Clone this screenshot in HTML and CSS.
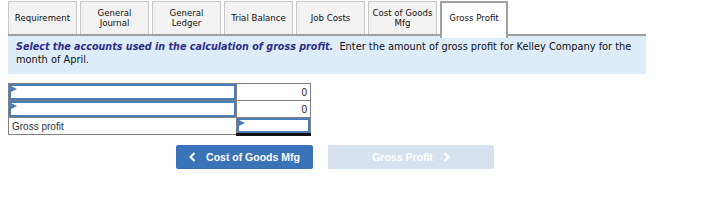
FILE: index.html
```html
<!DOCTYPE html>
<html lang="en">
<head>
    <meta charset="UTF-8">
    <title>Gross Profit</title>
    <link rel="stylesheet" href="styles.css">
</head>
<body>
    <div class="tabs">
        <div class="tab">Requirement</div>
        <div class="tab">General<br>Journal</div>
        <div class="tab">General<br>Ledger</div>
        <div class="tab">Trial Balance</div>
        <div class="tab">Job Costs</div>
        <div class="tab">Cost of Goods<br>Mfg</div>
        <div class="tab active">Gross Profit</div>
    </div>

    <div class="instructions">
        <b><i>Select the accounts used in the calculation of gross profit.</i></b> &nbsp;Enter the amount of gross profit for Kelley Company for the month of April.
    </div>

    <table class="sheet">
        <tr>
            <td class="acct"><div class="field"><span class="flag"></span></div></td>
            <td class="amt">0</td>
        </tr>
        <tr>
            <td class="acct"><div class="field"><span class="flag"></span></div></td>
            <td class="amt">0</td>
        </tr>
        <tr>
            <td class="label">Gross profit</td>
            <td class="amt total"><div class="field"><span class="flag"></span></div></td>
        </tr>
    </table>

    <div class="nav">
        <button class="btn prev">
            <svg width="7" height="10" viewBox="0 0 7 10"><polyline points="5.5,1 1.5,5 5.5,9" fill="none" stroke="white" stroke-width="2"/></svg>
            Cost of Goods Mfg
        </button>
        <button class="btn next" disabled>
            Gross Profit
            <svg width="7" height="10" viewBox="0 0 7 10"><polyline points="1.5,1 5.5,5 1.5,9" fill="none" stroke="white" stroke-width="2"/></svg>
        </button>
    </div>
</body>
</html>
```

FILE: styles.css
```css
body {
    margin: 0;
    padding: 1px 8px 8px 8px;
    font-family: "DejaVu Sans", Verdana, sans-serif;
    color: #222;
    width: 638px;
}
.tabs {
    display: flex;
    gap: 3px;
    border-bottom: 2px solid #a0a0a0;
    height: 33px;
}
.tab {
    width: 67px;
    height: 32px;
    display: flex;
    align-items: center;
    justify-content: center;
    text-align: center;
    font-size: 8.6px;
    line-height: 10px;
    background: #f2f2f2;
    border: 1px solid #c8c8c8;
    border-bottom: none;
    color: #111;
}
.tab.active {
    width: 64px;
    background: white;
    border: 2px solid #a0a0a0;
    border-bottom: none;
    height: 30px;
    padding-bottom: 5px;
    position: relative;
    z-index: 1;
}
.instructions {
    background: #dcecf9;
    padding: 4px 6px 8px 8px;
    font-size: 9.8px;
    line-height: 13px;
    color: #111;
}
.instructions b {
    font-size: 9.6px;
}
.instructions i {
    color: #2e2e88;
}
.sheet {
    border-collapse: collapse;
    margin-top: 9px;
    font-family: "Liberation Sans", Arial, sans-serif;
    font-size: 10px;
}
.sheet td {
    border: 1px solid #808080;
    height: 15px;
    padding: 0;
}
.acct {
    width: 227px;
}
.amt {
    width: 74px;
    text-align: right;
    padding-right: 3px !important;
    box-sizing: border-box;
}
.label {
    padding-left: 3px !important;
    color: #333;
}
.field {
    height: 12px;
    border: 2px solid #4a7ebb;
    position: relative;
    background: white;
}
.flag {
    position: absolute;
    top: 0;
    left: 0;
    border-top: 3px solid transparent;
    border-bottom: 3px solid transparent;
    border-left: 6px solid #4a7ebb;
}
.total {
    border-bottom: 3px solid #111 !important;
    padding-right: 0 !important;
}
.total .field {
    height: 11px;
}
.nav {
    display: flex;
    gap: 15px;
    margin: 9px 0 0 168px;
}
.btn {
    height: 24px;
    border: none;
    border-radius: 2px;
    font-family: "Liberation Sans", Arial, sans-serif;
    font-weight: bold;
    font-size: 10.5px;
    color: white;
    display: flex;
    align-items: center;
    justify-content: center;
    gap: 10px;
}
.prev {
    width: 137px;
    background: #3b73b9;
}
.next {
    width: 166px;
    background: #d6e2f0;
}
```
